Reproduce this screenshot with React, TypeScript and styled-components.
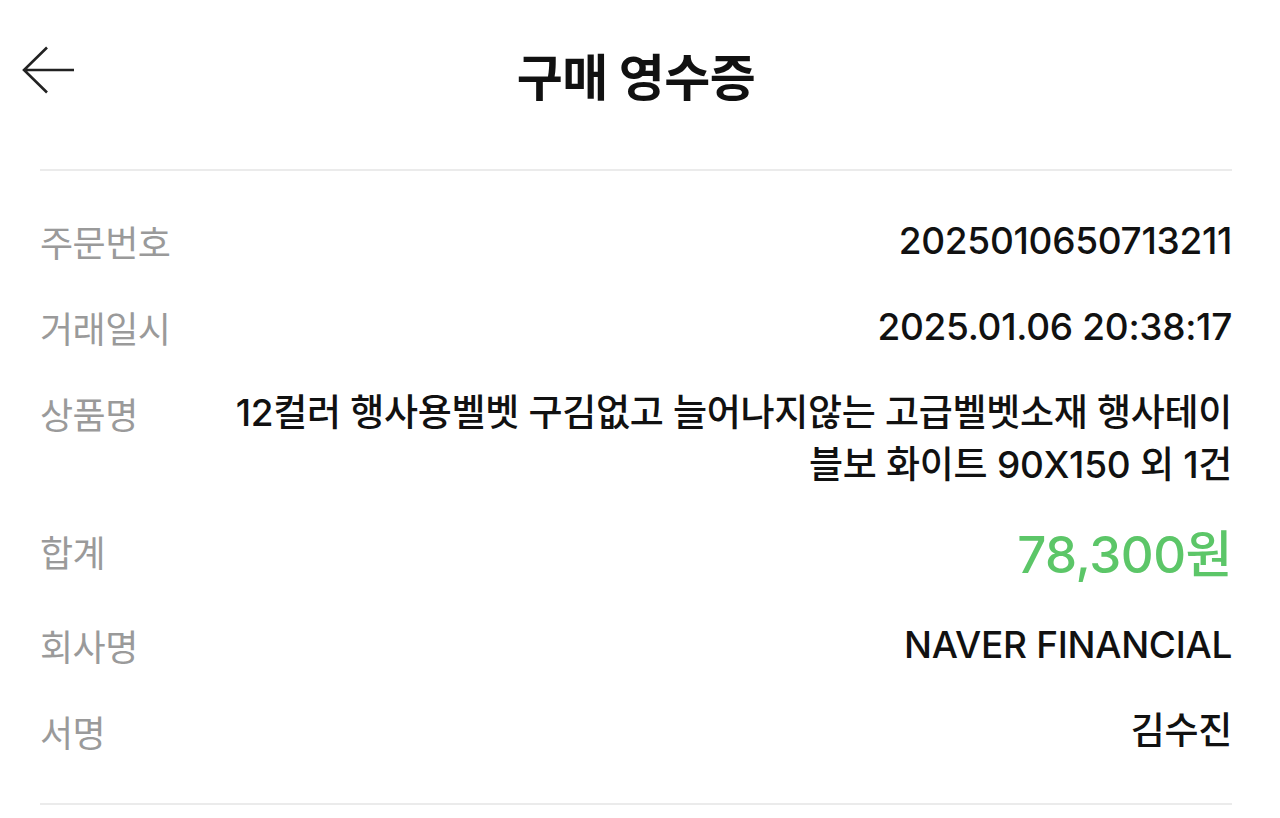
import React from "react";
import styled, { createGlobalStyle } from "styled-components";

const GlobalStyle = createGlobalStyle`
  html, body {
    margin: 0;
    padding: 0;
    background: #ffffff;
  }
  body {
    font-family: "Inter", "Noto Sans CJK KR", sans-serif;
    color: #111111;
  }
  * { box-sizing: border-box; }
`;

const Page = styled.div`
  width: 1280px;
  min-height: 818px;
  background: #ffffff;
  overflow: hidden;
`;

const Header = styled.header`
  height: 169px;
  display: grid;
  grid-template-columns: 1fr auto 1fr;
  align-items: start;
  padding: 44px 30px 0 22px;
`;

const BackButton = styled.button`
  justify-self: start;
  margin-top: 2px;
  padding: 0;
  border: none;
  background: none;
  width: 54px;
  height: 48px;
  cursor: pointer;
  color: #222222;
  display: flex;
`;

const Title = styled.h1`
  margin: 0;
  font-family: "Noto Sans CJK KR", sans-serif;
  font-size: 50px;
  line-height: 60px;
  font-weight: 700;
  color: #111111;
  letter-spacing: -0.5px;
`;

const Divider = styled.hr`
  margin: 0 48px 0 40px;
  border: none;
  height: 2px;
  background: #ebebeb;
`;

const List = styled.dl`
  margin: 0;
  padding: 44px 48px 46px 40px;
  display: flex;
  flex-direction: column;
  gap: 34px;
`;

const Row = styled.div`
  display: flex;
  align-items: center;
  justify-content: space-between;
`;

const Label = styled.dt`
  flex-shrink: 0;
  width: 180px;
  align-self: flex-start;
  font-family: "Noto Sans CJK KR", sans-serif;
  font-size: 36px;
  line-height: 52px;
  font-weight: 400;
  color: #9a9a9a;
  letter-spacing: -0.5px;
`;

const Value = styled.dd<{ $accent?: boolean }>`
  margin: 0;
  flex: 1;
  text-align: right;
  font-family: "Inter", "Noto Sans CJK KR", sans-serif;
  font-size: ${(p) => (p.$accent ? "51px" : "37px")};
  line-height: ${(p) => (p.$accent ? "60px" : "52px")};
  font-weight: 500;
  color: ${(p) => (p.$accent ? "#5cc668" : "#111111")};
  letter-spacing: ${(p) => (p.$accent ? "-0.5px" : "-0.3px")};
`;

const rows: { label: string; value: string; accent?: boolean }[] = [
  { label: "주문번호", value: "2025010650713211" },
  { label: "거래일시", value: "2025.01.06 20:38:17" },
  {
    label: "상품명",
    value: "12컬러 행사용벨벳 구김없고 늘어나지않는 고급벨벳소재 행사테이블보 화이트 90X150 외 1건",
  },
  { label: "합계", value: "78,300원", accent: true },
  { label: "회사명", value: "NAVER FINANCIAL" },
  { label: "서명", value: "김수진" },
];

export default function App() {
  return (
    <Page>
      <GlobalStyle />
      <Header>
        <BackButton aria-label="뒤로">
          <svg width="54" height="48" viewBox="0 0 54 48" fill="none">
            <path
              d="M2 24 H52 M25 1.5 L2 24 L25 46.5"
              stroke="currentColor"
              strokeWidth="2.6"
              strokeLinecap="butt"
              strokeLinejoin="miter"
            />
          </svg>
        </BackButton>
        <Title>구매 영수증</Title>
        <span />
      </Header>
      <Divider />
      <List>
        {rows.map((r) => (
          <Row key={r.label}>
            <Label>{r.label}</Label>
            <Value $accent={r.accent}>{r.value}</Value>
          </Row>
        ))}
      </List>
      <Divider />
    </Page>
  );
}
